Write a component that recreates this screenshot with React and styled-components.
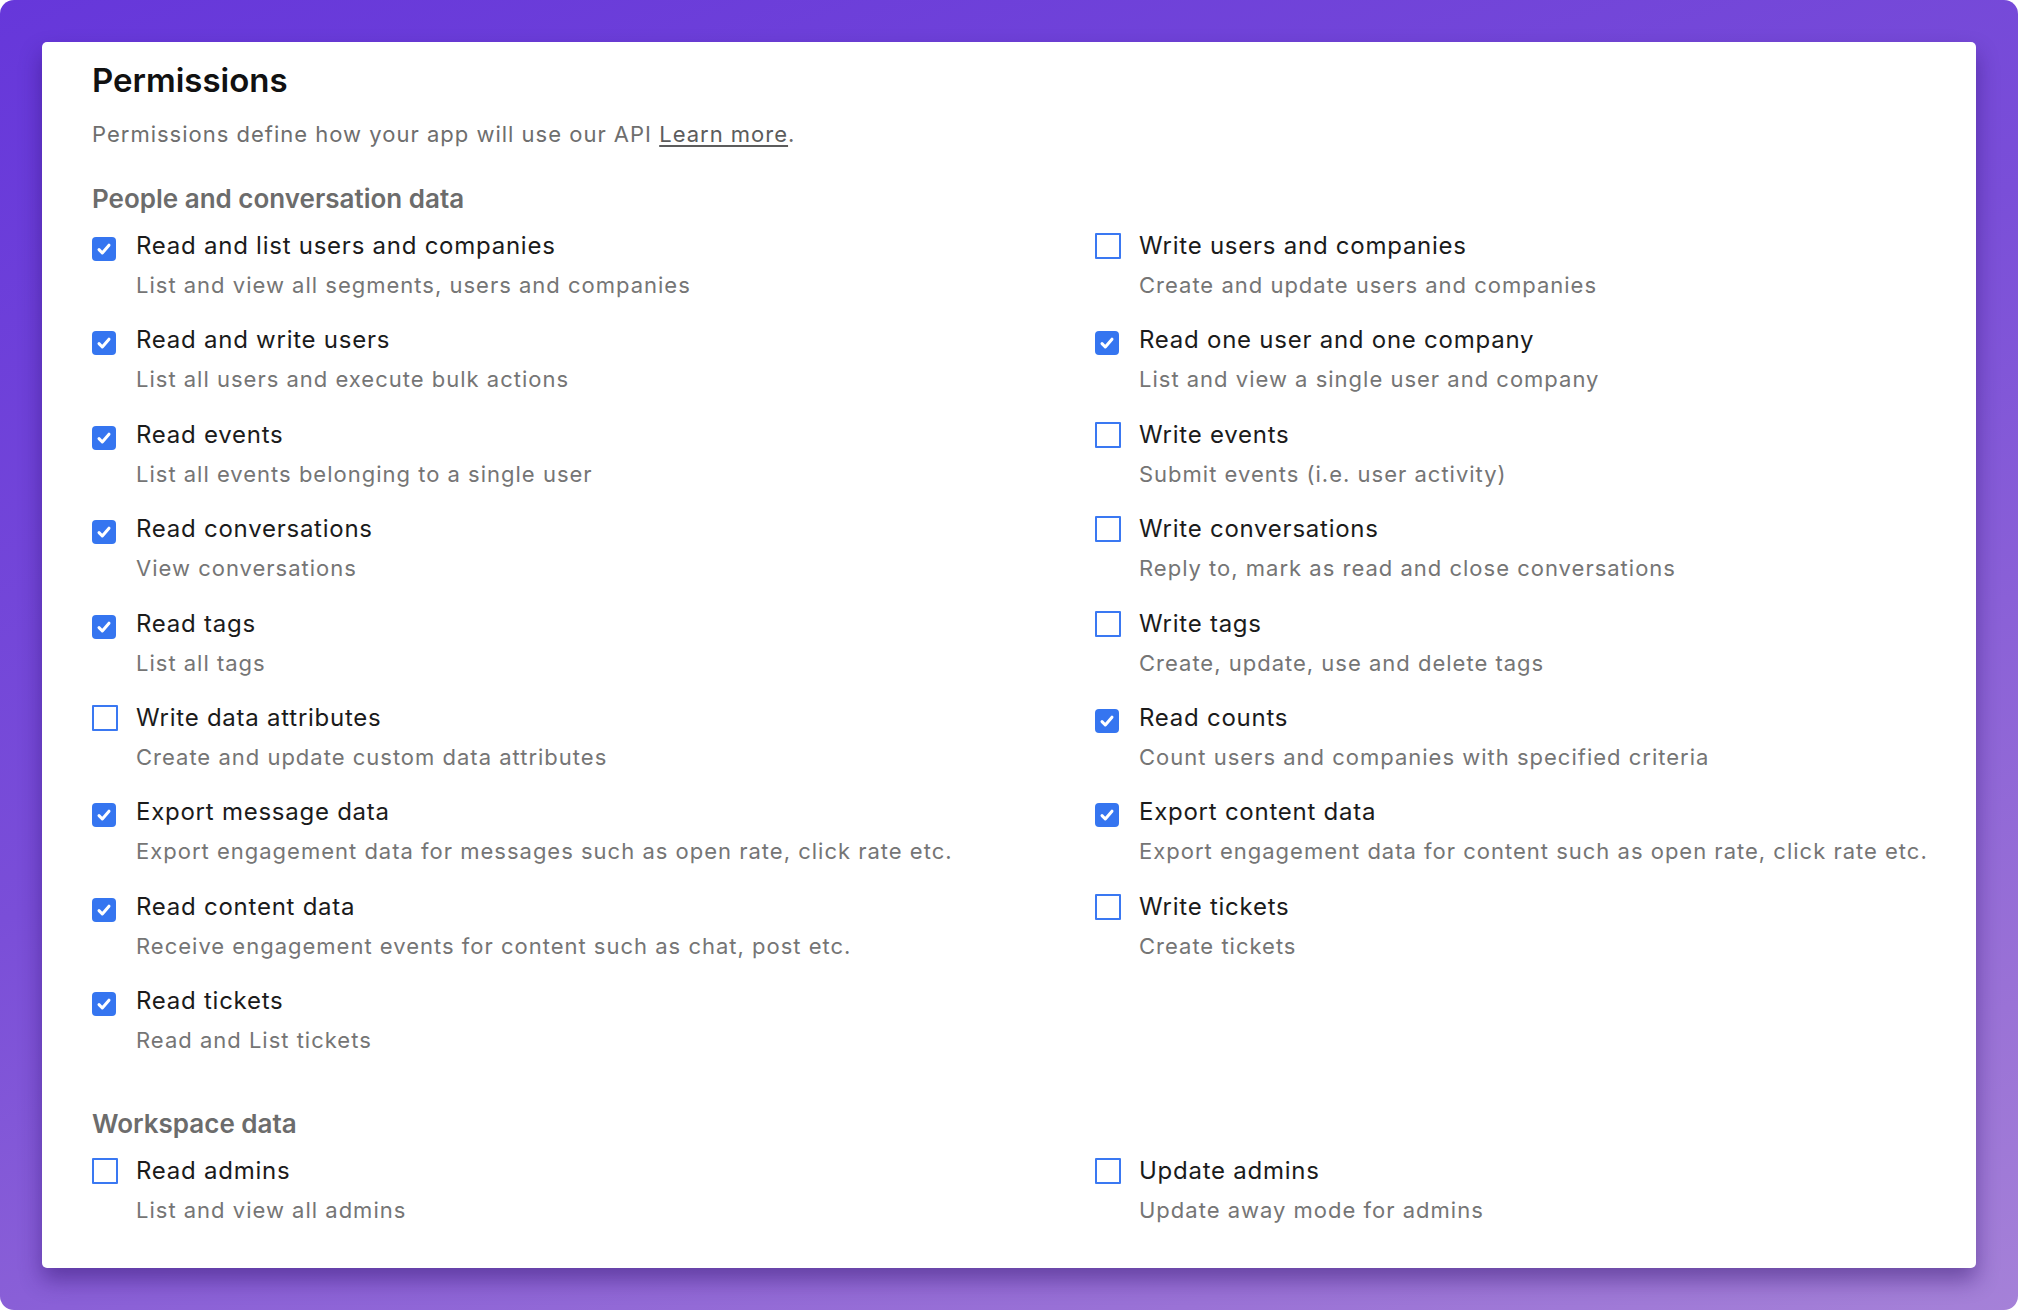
import styled, { createGlobalStyle } from 'styled-components';

const peopleData = [
  [
    { label: 'Read and list users and companies', desc: 'List and view all segments, users and companies', on: true },
    { label: 'Write users and companies', desc: 'Create and update users and companies', on: false },
  ],
  [
    { label: 'Read and write users', desc: 'List all users and execute bulk actions', on: true },
    { label: 'Read one user and one company', desc: 'List and view a single user and company', on: true },
  ],
  [
    { label: 'Read events', desc: 'List all events belonging to a single user', on: true },
    { label: 'Write events', desc: 'Submit events (i.e. user activity)', on: false },
  ],
  [
    { label: 'Read conversations', desc: 'View conversations', on: true },
    { label: 'Write conversations', desc: 'Reply to, mark as read and close conversations', on: false },
  ],
  [
    { label: 'Read tags', desc: 'List all tags', on: true },
    { label: 'Write tags', desc: 'Create, update, use and delete tags', on: false },
  ],
  [
    { label: 'Write data attributes', desc: 'Create and update custom data attributes', on: false },
    { label: 'Read counts', desc: 'Count users and companies with specified criteria', on: true },
  ],
  [
    { label: 'Export message data', desc: 'Export engagement data for messages such as open rate, click rate etc.', on: true },
    { label: 'Export content data', desc: 'Export engagement data for content such as open rate, click rate etc.', on: true },
  ],
  [
    { label: 'Read content data', desc: 'Receive engagement events for content such as chat, post etc.', on: true },
    { label: 'Write tickets', desc: 'Create tickets', on: false },
  ],
  [{ label: 'Read tickets', desc: 'Read and List tickets', on: true }],
];

const workspaceData = [
  [
    { label: 'Read admins', desc: 'List and view all admins', on: false },
    { label: 'Update admins', desc: 'Update away mode for admins', on: false },
  ],
];

function Check({ on }) {
  if (!on) return <EmptyBox />;
  return (
    <CheckedBox>
      <svg width="18" height="18" viewBox="0 0 18 18" fill="none">
        <path d="M4 9.6l3.3 3.4L14 5.2" stroke="#fff" strokeWidth="3" strokeLinecap="round" strokeLinejoin="round" />
      </svg>
    </CheckedBox>
  );
}

function Section({ title, rows, first }) {
  return (
    <>
      <SectionTitle $first={first}>{title}</SectionTitle>
      <Grid>
        {rows.flat().map((p) => (
          <Item key={p.label}>
            <Slot>
              <Check on={p.on} />
            </Slot>
            <div>
              <Label>{p.label}</Label>
              <Desc>{p.desc}</Desc>
            </div>
          </Item>
        ))}
      </Grid>
    </>
  );
}

export default function App() {
  return (
    <>
      <GlobalStyle />
      <Backdrop>
        <Card>
          <Title>Permissions</Title>
          <Intro>
            Permissions define how your app will use our API <a href="#">Learn more</a>.
          </Intro>
          <Section title="People and conversation data" rows={peopleData} first />
          <Section title="Workspace data" rows={workspaceData} />
        </Card>
      </Backdrop>
    </>
  );
}

// ---------------- styled components ----------------

const GlobalStyle = createGlobalStyle`
  html, body {
    margin: 0;
    background: #ffffff;
  }
  * { box-sizing: border-box; }
  body {
    font-family: Inter, "Noto Sans", "Liberation Sans", sans-serif;
    -webkit-font-smoothing: antialiased;
  }
`;

const Backdrop = styled.div`
  width: 2018px;
  height: 1310px;
  padding: 42px;
  border-radius: 14px;
  background: linear-gradient(160deg, #6637da 0%, #7a4ed8 45%, #9a72d6 85%, #a581d8 100%);
`;

const Card = styled.div`
  background: #fff;
  border-radius: 5px;
  height: 1226px;
  padding: 19px 50px 46px;
  box-shadow: 0 12px 22px rgba(40, 12, 100, 0.45);
`;

const Title = styled.h1`
  margin: 0;
  font-size: 33px;
  line-height: 38px;
  font-weight: 600;
  color: #111;
`;

const Intro = styled.p`
  margin: 21px 0 0;
  font-size: 22px;
  line-height: 28px;
  letter-spacing: 1px;
  color: #6e6e6e;

  a {
    color: #5c5c5c;
    text-decoration: underline;
    text-underline-offset: 3px;
  }
`;

const SectionTitle = styled.h2`
  margin: ${(p) => (p.$first ? '37px' : '56px')} 0 17px;
  font-size: 26px;
  line-height: 28px;
  font-weight: 600;
  color: #6c6c6c;
`;

const Grid = styled.div`
  display: grid;
  grid-template-columns: 1003px 1fr;
  row-gap: 25.4px;
`;

const Item = styled.div`
  display: flex;
  gap: 18px;
`;

const Slot = styled.div`
  width: 26px;
  flex: none;
`;

const CheckedBox = styled.div`
  width: 24px;
  height: 24px;
  margin-top: 7px;
  border-radius: 4px;
  background: #3575f0;
  display: flex;
  align-items: center;
  justify-content: center;
`;

const EmptyBox = styled.div`
  width: 26px;
  height: 26px;
  margin-top: 3px;
  border: 2px solid #3a78f2;
  border-radius: 1px;
  background: #fff;
`;

const Label = styled.div`
  font-size: 24px;
  line-height: 32px;
  letter-spacing: 0.75px;
  color: #1b1b1b;
  white-space: nowrap;
`;

const Desc = styled.div`
  margin-top: 9px;
  font-size: 22px;
  line-height: 28px;
  letter-spacing: 1px;
  color: #757575;
  white-space: nowrap;
`;
